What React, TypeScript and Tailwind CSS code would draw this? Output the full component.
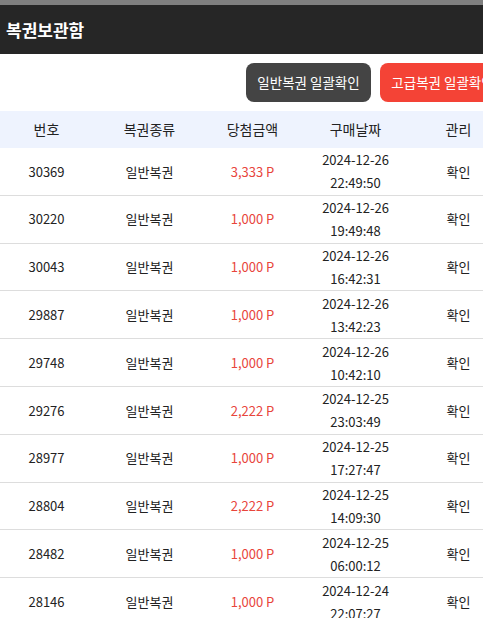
import React from "react";

const rows = [
  ["30369", "일반복권", "3,333 P", "2024-12-26", "22:49:50"],
  ["30220", "일반복권", "1,000 P", "2024-12-26", "19:49:48"],
  ["30043", "일반복권", "1,000 P", "2024-12-26", "16:42:31"],
  ["29887", "일반복권", "1,000 P", "2024-12-26", "13:42:23"],
  ["29748", "일반복권", "1,000 P", "2024-12-26", "10:42:10"],
  ["29276", "일반복권", "2,222 P", "2024-12-25", "23:03:49"],
  ["28977", "일반복권", "1,000 P", "2024-12-25", "17:27:47"],
  ["28804", "일반복권", "2,222 P", "2024-12-25", "14:09:30"],
  ["28482", "일반복권", "1,000 P", "2024-12-25", "06:00:12"],
  ["28146", "일반복권", "1,000 P", "2024-12-24", "22:07:27"],
];

export default function App() {
  return (
    <div
      className="w-[483px] h-[618px] overflow-hidden bg-white text-[#222]"
      style={{ fontFamily: '"Malgun Gothic", "Noto Sans CJK KR", "Noto Sans", sans-serif' }}
    >
      <div className="h-[5px] bg-[#7f7f7f]" />
      <div className="h-[49px] bg-[#262626] flex items-center px-[6px]">
        <span className="text-white font-bold text-[17px]">복권보관함</span>
      </div>
      <div className="w-[515px] -ml-[5px]">
        <div className="flex justify-end gap-[9px] pt-[9px] pr-[5px] pb-[9px]">
          <button className="h-[39px] w-[125px] shrink-0 rounded-[8px] bg-[#444444] text-white text-[13.5px] whitespace-nowrap">
            일반복권 일괄확인
          </button>
          <button className="h-[39px] w-[125px] shrink-0 rounded-[8px] bg-[#f44336] text-white text-[13.5px] whitespace-nowrap">
            고급복권 일괄확인
          </button>
        </div>
        <div className="grid grid-cols-5 h-[37px] items-center bg-[#eef3fe] text-[14px] text-center">
          <div>번호</div>
          <div>복권종류</div>
          <div>당첨금액</div>
          <div>구매날짜</div>
          <div>관리</div>
        </div>
        {rows.map((r) => (
          <div
            key={r[0]}
            className="grid grid-cols-5 h-[47.8px] items-center border-b border-[#dddddd] text-[13px] text-center"
          >
            <div>{r[0]}</div>
            <div>{r[1]}</div>
            <div className="text-[#e8453c]">{r[2]}</div>
            <div className="leading-[23px]">
              <div>{r[3]}</div>
              <div>{r[4]}</div>
            </div>
            <div>확인</div>
          </div>
        ))}
      </div>
    </div>
  );
}
